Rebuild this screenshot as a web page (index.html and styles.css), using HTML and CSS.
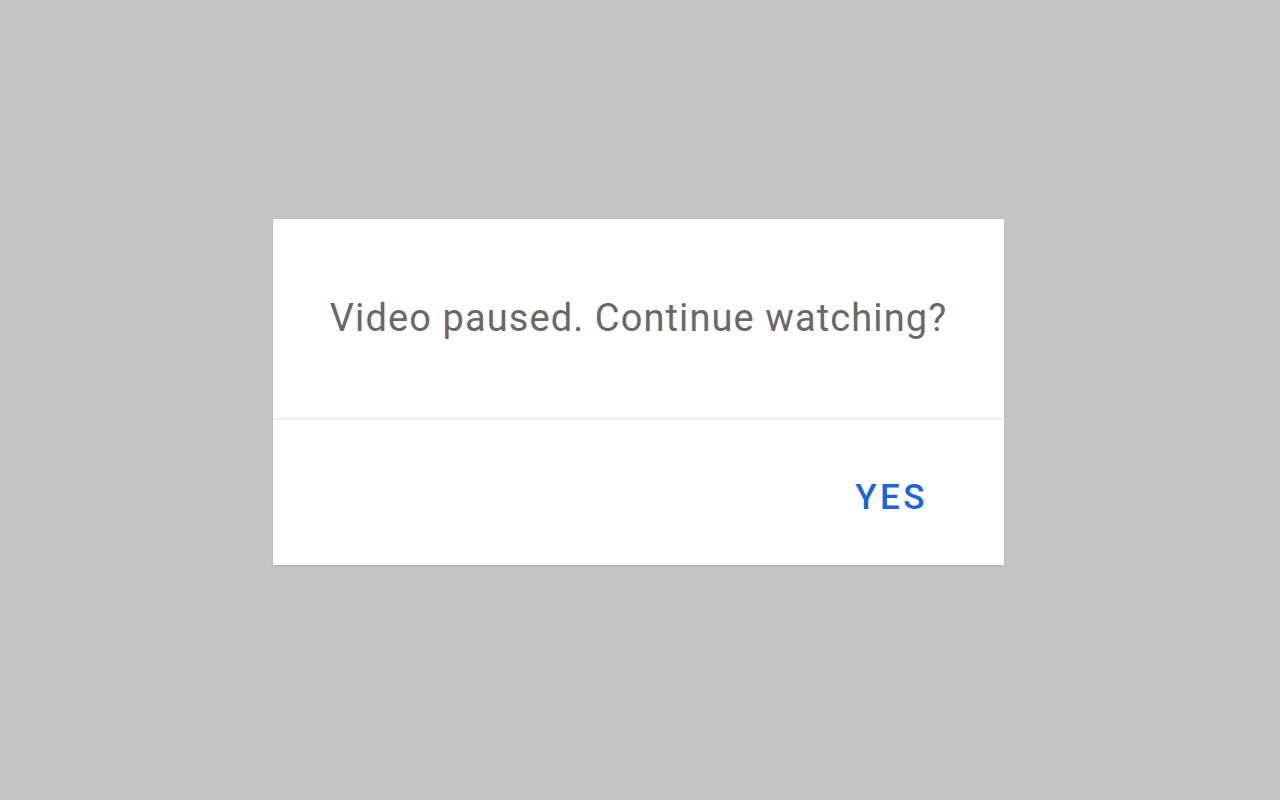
FILE: index.html
```html
<!DOCTYPE html>
<html>
<head>
<meta charset="utf-8">
<link rel="stylesheet" href="styles.css">
</head>
<body>
<div class="page">
  <div class="dialog">
    <div class="dialog-body">
      <p class="message">Video paused. Continue watching?</p>
    </div>
    <div class="dialog-actions">
      <button class="btn-yes">YES</button>
    </div>
  </div>
</div>
</body>
</html>
```

FILE: styles.css
```css
html, body {
  margin: 0;
  padding: 0;
  height: 100%;
}
body {
  background: #c4c4c4;
  font-family: Roboto, "Liberation Sans", Arial, sans-serif;
}
.page {
  display: flex;
  justify-content: flex-start;
  padding: 219px 0 0 273px;
}
.dialog {
  width: 731px;
  height: 346px;
  background: #fff;
  box-shadow: 0 1px 3px rgba(0,0,0,0.10);
  display: flex;
  flex-direction: column;
}
.dialog-body {
  height: 201px;
  display: flex;
  align-items: center;
  justify-content: center;
  border-bottom: 2px solid #eeeeee;
  box-sizing: border-box;
}
.message {
  margin: 0 0 2px 0;
  font-size: 38px;
  letter-spacing: 1.1px;
  color: #686868;
  font-weight: 400;
}
.dialog-actions {
  flex: 1;
  display: flex;
  align-items: center;
  justify-content: flex-end;
  padding-right: 76px;
  padding-top: 10px;
}
.btn-yes {
  border: none;
  background: none;
  padding: 0;
  font-family: Roboto, "Liberation Sans", Arial, sans-serif;
  font-weight: 500;
  font-size: 35px;
  letter-spacing: 3.5px;
  color: #1a66d8;
  cursor: pointer;
}
```
